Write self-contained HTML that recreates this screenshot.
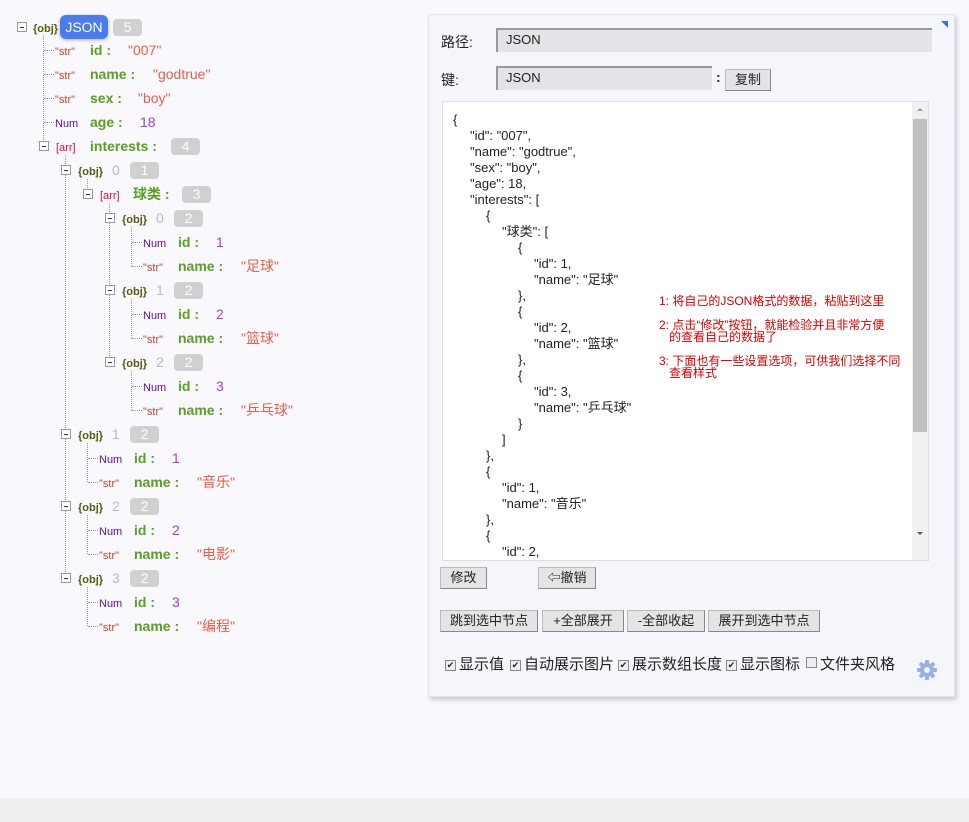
<!DOCTYPE html>
<html><head><meta charset="utf-8"><style>
*{box-sizing:border-box;margin:0;padding:0}
body{width:969px;height:822px;background:#f8f8fd;position:relative;overflow:hidden;font-family:"Liberation Sans","Noto Sans CJK SC",sans-serif}
.foot{position:absolute;left:0;top:798px;width:969px;height:24px;background:#eeeeee}
.r{position:absolute;left:0;height:20px;width:420px}
.r span{position:absolute;top:0;line-height:20px;white-space:nowrap}
.t{width:10px;height:10px;border:1px solid #999;background:#fff;top:5px!important}
.t:after{content:"";position:absolute;left:2px;top:3.5px;width:4px;height:1px;background:#333}
.o{font-size:11px;color:#5a5a10;font-weight:bold;top:2px!important}
.a{font-size:11px;color:#d0103a;top:2px!important}
.s{font-size:11px;color:#c8402a;top:2px!important}
.n{font-size:11px;color:#6010a0;top:2px!important}
.k{font-size:14px;font-weight:bold;color:#5aa020}
.v{font-size:14px;color:#e8604a}
.nv{font-size:14px;color:#a040e0}
.ix{font-size:14px;color:#bbb}
.b{height:17px;top:2px!important;line-height:17px!important;background:#d0d0d0;color:#fff;border-radius:4px;font-size:14px;text-align:center;width:29px}
.vl{position:absolute;border-left:1px dotted #999;width:0}
.hl{position:absolute;border-top:1px dotted #999;height:0;width:10px}
.panel{position:absolute;left:428px;top:14px;width:527px;height:683px;background:#f4f6fc;border:1px solid #e0e4ee;box-shadow:2px 3px 4px rgba(0,0,0,.18)}
.lbl{position:absolute;font-size:14px;color:#222}
.inp{position:absolute;background:#e4e4e8;border-top:2px solid #999;border-left:2px solid #999;font-size:13px;line-height:20px;padding-left:8px;color:#222}
.btn{position:absolute;background:#e4e4e4;border:1px solid #bbb;border-right-color:#888;border-bottom-color:#888;font-size:13px;text-align:center;line-height:20px;color:#222;height:22px}
.ta{position:absolute;left:13px;top:86px;width:487px;height:460px;background:#fff;border:1px solid #dde;overflow:hidden}
.code{position:absolute;left:10px;top:10px;font-size:13px;line-height:16px;color:#222;white-space:normal}
.code div{height:16px;white-space:nowrap}
.l1{padding-left:17px}.l2{padding-left:33px}.l3{padding-left:49px}.l4{padding-left:65px}.l5{padding-left:81px}
.sb{position:absolute;right:0;top:0;width:16px;height:458px;background:#f0f0f0}
.red{position:absolute;font-size:12px;color:#d80000;line-height:12px;white-space:pre}
.cb{position:absolute;top:638px;font-size:15px;color:#222;white-space:nowrap}
.cb i{display:inline-block;width:11px;height:11px;border:1px solid #888;background:#eee;margin-right:3px;font-style:normal;font-size:9px;line-height:9px;text-align:center;vertical-align:1px}
</style></head><body>
<div class="vl" style="left:43px;top:35px;height:111px"></div>
<div class="vl" style="left:65px;top:155px;height:423px"></div>
<div class="vl" style="left:87px;top:179px;height:15px"></div>
<div class="vl" style="left:109px;top:203px;height:159px"></div>
<div class="vl" style="left:131px;top:227px;height:39px"></div>
<div class="vl" style="left:131px;top:299px;height:39px"></div>
<div class="vl" style="left:131px;top:371px;height:39px"></div>
<div class="vl" style="left:87px;top:443px;height:39px"></div>
<div class="vl" style="left:87px;top:515px;height:39px"></div>
<div class="vl" style="left:87px;top:587px;height:39px"></div>

<div class="r" style="top:17px"><span class="t" style="left:17px"></span><span class="o" style="left:33px">{obj}</span><span style="left:60px;top:-2px;height:24px;width:48px;background:#4a7cf0;color:#fff;border-radius:6px;font-size:14px;line-height:24px;text-align:center;box-shadow:0 1px 3px rgba(0,0,0,.3)">JSON</span><span class="b" style="left:113px">5</span></div>
<div class="r" style="top:40px"><span class="hl" style="left:44px;top:10px"></span><span class="s" style="left:55px">"str"</span><span class="k" style="left:90px">id :</span><span class="v" style="left:128px">"007"</span></div>
<div class="r" style="top:64px"><span class="hl" style="left:44px;top:10px"></span><span class="s" style="left:55px">"str"</span><span class="k" style="left:90px">name :</span><span class="v" style="left:153px">"godtrue"</span></div>
<div class="r" style="top:88px"><span class="hl" style="left:44px;top:10px"></span><span class="s" style="left:55px">"str"</span><span class="k" style="left:90px">sex :</span><span class="v" style="left:138px">"boy"</span></div>
<div class="r" style="top:112px"><span class="hl" style="left:44px;top:10px"></span><span class="n" style="left:55px">Num</span><span class="k" style="left:90px">age :</span><span class="nv" style="left:140px">18</span></div>
<div class="r" style="top:136px"><span class="t" style="left:39px"></span><span class="a" style="left:56px">[arr]</span><span class="k" style="left:90px">interests :</span><span class="b" style="left:171px">4</span></div>
<div class="r" style="top:160px"><span class="t" style="left:61px"></span><span class="o" style="left:78px">{obj}</span><span class="ix" style="left:112px">0</span><span class="b" style="left:130px">1</span></div>
<div class="r" style="top:184px"><span class="t" style="left:83px"></span><span class="a" style="left:100px">[arr]</span><span class="k" style="left:133px">球类 :</span><span class="b" style="left:182px">3</span></div>
<div class="r" style="top:208px"><span class="t" style="left:105px"></span><span class="o" style="left:122px">{obj}</span><span class="ix" style="left:156px">0</span><span class="b" style="left:174px">2</span></div>
<div class="r" style="top:232px"><span class="hl" style="left:132px;top:10px"></span><span class="n" style="left:143px">Num</span><span class="k" style="left:178px">id :</span><span class="nv" style="left:216px">1</span></div>
<div class="r" style="top:256px"><span class="hl" style="left:132px;top:10px"></span><span class="s" style="left:143px">"str"</span><span class="k" style="left:178px">name :</span><span class="v" style="left:241px">"足球"</span></div>
<div class="r" style="top:280px"><span class="t" style="left:105px"></span><span class="o" style="left:122px">{obj}</span><span class="ix" style="left:156px">1</span><span class="b" style="left:174px">2</span></div>
<div class="r" style="top:304px"><span class="hl" style="left:132px;top:10px"></span><span class="n" style="left:143px">Num</span><span class="k" style="left:178px">id :</span><span class="nv" style="left:216px">2</span></div>
<div class="r" style="top:328px"><span class="hl" style="left:132px;top:10px"></span><span class="s" style="left:143px">"str"</span><span class="k" style="left:178px">name :</span><span class="v" style="left:241px">"篮球"</span></div>
<div class="r" style="top:352px"><span class="t" style="left:105px"></span><span class="o" style="left:122px">{obj}</span><span class="ix" style="left:156px">2</span><span class="b" style="left:174px">2</span></div>
<div class="r" style="top:376px"><span class="hl" style="left:132px;top:10px"></span><span class="n" style="left:143px">Num</span><span class="k" style="left:178px">id :</span><span class="nv" style="left:216px">3</span></div>
<div class="r" style="top:400px"><span class="hl" style="left:132px;top:10px"></span><span class="s" style="left:143px">"str"</span><span class="k" style="left:178px">name :</span><span class="v" style="left:241px">"乒乓球"</span></div>
<div class="r" style="top:424px"><span class="t" style="left:61px"></span><span class="o" style="left:78px">{obj}</span><span class="ix" style="left:112px">1</span><span class="b" style="left:130px">2</span></div>
<div class="r" style="top:448px"><span class="hl" style="left:88px;top:10px"></span><span class="n" style="left:99px">Num</span><span class="k" style="left:134px">id :</span><span class="nv" style="left:172px">1</span></div>
<div class="r" style="top:472px"><span class="hl" style="left:88px;top:10px"></span><span class="s" style="left:99px">"str"</span><span class="k" style="left:134px">name :</span><span class="v" style="left:197px">"音乐"</span></div>
<div class="r" style="top:496px"><span class="t" style="left:61px"></span><span class="o" style="left:78px">{obj}</span><span class="ix" style="left:112px">2</span><span class="b" style="left:130px">2</span></div>
<div class="r" style="top:520px"><span class="hl" style="left:88px;top:10px"></span><span class="n" style="left:99px">Num</span><span class="k" style="left:134px">id :</span><span class="nv" style="left:172px">2</span></div>
<div class="r" style="top:544px"><span class="hl" style="left:88px;top:10px"></span><span class="s" style="left:99px">"str"</span><span class="k" style="left:134px">name :</span><span class="v" style="left:197px">"电影"</span></div>
<div class="r" style="top:568px"><span class="t" style="left:61px"></span><span class="o" style="left:78px">{obj}</span><span class="ix" style="left:112px">3</span><span class="b" style="left:130px">2</span></div>
<div class="r" style="top:592px"><span class="hl" style="left:88px;top:10px"></span><span class="n" style="left:99px">Num</span><span class="k" style="left:134px">id :</span><span class="nv" style="left:172px">3</span></div>
<div class="r" style="top:616px"><span class="hl" style="left:88px;top:10px"></span><span class="s" style="left:99px">"str"</span><span class="k" style="left:134px">name :</span><span class="v" style="left:197px">"编程"</span></div>

<div class="panel">
<div style="position:absolute;right:6px;top:6px;width:0;height:0;border-left:7px solid transparent;border-top:7px solid #4a6ee0"></div>
<div class="lbl" style="left:12px;top:17px">路径:</div>
<div class="inp" style="left:67px;top:13px;width:436px;height:24px">JSON</div>
<div class="lbl" style="left:12px;top:55px">键:</div>
<div class="inp" style="left:67px;top:51px;width:216px;height:24px">JSON</div>
<div class="lbl" style="left:287px;top:54px;font-weight:bold">:</div>
<div class="btn" style="left:296px;top:54px;width:46px">复制</div>
<div class="ta"><div class="code"><div>{</div><div class="l1">"id": "007",</div><div class="l1">"name": "godtrue",</div><div class="l1">"sex": "boy",</div><div class="l1">"age": 18,</div><div class="l1">"interests": [</div><div class="l2">{</div><div class="l3">"球类": [</div><div class="l4">{</div><div class="l5">"id": 1,</div><div class="l5">"name": "足球"</div><div class="l4">},</div><div class="l4">{</div><div class="l5">"id": 2,</div><div class="l5">"name": "篮球"</div><div class="l4">},</div><div class="l4">{</div><div class="l5">"id": 3,</div><div class="l5">"name": "乒乓球"</div><div class="l4">}</div><div class="l3">]</div><div class="l2">},</div><div class="l2">{</div><div class="l3">"id": 1,</div><div class="l3">"name": "音乐"</div><div class="l2">},</div><div class="l2">{</div><div class="l3">"id": 2,</div></div>
<div class="sb"><div style="position:absolute;left:1px;top:17px;width:14px;height:313px;background:#c0c0c0"></div><div style="position:absolute;left:5px;top:6px;border:3px solid transparent;border-bottom-color:#999;border-top:0"></div><div style="position:absolute;left:5px;top:430px;border:3px solid transparent;border-top-color:#555;border-bottom:0"></div></div>
<div class="red" style="left:216px;top:193px">1: 将自己的JSON格式的数据，粘贴到这里</div>
<div class="red" style="left:216px;top:217px">2: 点击“修改”按钮，就能检验并且非常方便
   的查看自己的数据了</div>
<div class="red" style="left:216px;top:253px">3: 下面也有一些设置选项，可供我们选择不同
   查看样式</div>
</div>
<div class="btn" style="left:11px;top:552px;width:47px">修改</div>
<div class="btn" style="left:109px;top:552px;width:58px">⇦撤销</div>
<div class="btn" style="left:11px;top:595px;width:98px">跳到选中节点</div>
<div class="btn" style="left:113px;top:595px;width:82px">+全部展开</div>
<div class="btn" style="left:198px;top:595px;width:78px">-全部收起</div>
<div class="btn" style="left:279px;top:595px;width:112px">展开到选中节点</div>
<div class="cb" style="left:16px"><i>✔</i>显示值</div>
<div class="cb" style="left:81px"><i>✔</i>自动展示图片</div>
<div class="cb" style="left:189px"><i>✔</i>展示数组长度</div>
<div class="cb" style="left:297px"><i>✔</i>显示图标</div>
<div class="cb" style="left:377px"><i></i>文件夹风格</div>
<svg style="position:absolute;left:487px;top:644px" width="22" height="22" viewBox="0 0 22 22"><g fill="#9ab0e0"><circle cx="11" cy="11" r="7"/><rect x="9" y="1" width="4" height="20" rx="1"/><rect x="1" y="9" width="20" height="4" rx="1"/><rect x="9" y="1" width="4" height="20" rx="1" transform="rotate(45 11 11)"/><rect x="9" y="1" width="4" height="20" rx="1" transform="rotate(-45 11 11)"/></g><circle cx="11" cy="11" r="3" fill="#f4f6fc"/></svg>
</div>
<div class="foot"></div>
</body></html>
